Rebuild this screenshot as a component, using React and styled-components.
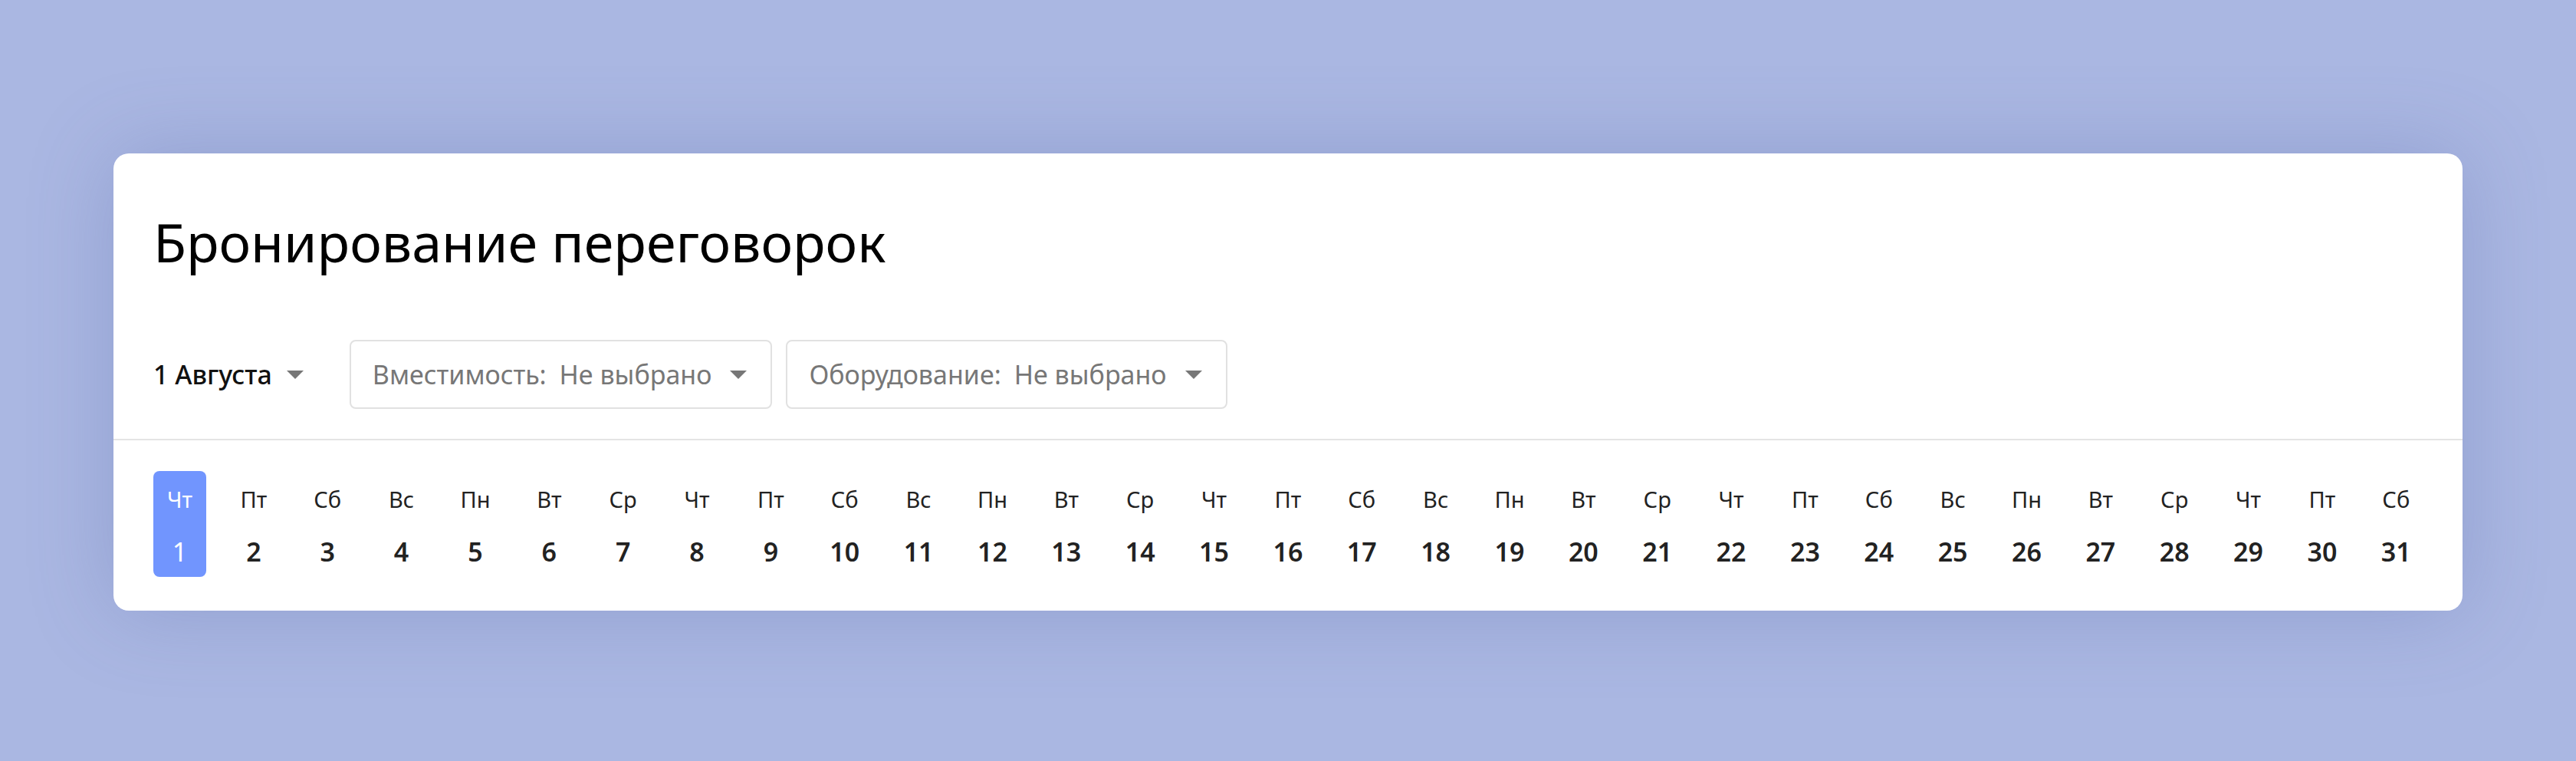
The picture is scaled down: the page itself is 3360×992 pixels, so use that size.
import React from 'react';
import styled, { createGlobalStyle } from 'styled-components';

const GlobalStyle = createGlobalStyle`
  html, body {
    margin: 0;
    padding: 0;
    background: #aab7e2;
  }
  body {
    font-family: 'Noto Sans', 'Open Sans', sans-serif;
  }
`;

const Page = styled.div`
  min-height: 992px;
  padding-top: 200px;
  box-sizing: border-box;
  background: #aab7e2;
`;

const Card = styled.div`
  width: 3064px;
  margin: 0 auto;
  background: #fff;
  border-radius: 20px;
  box-shadow: 0 0 110px rgba(80, 98, 160, 0.28);
`;

const Header = styled.div`
  padding: 73px 52px 39px;
`;

const Title = styled.h1`
  margin: 0;
  font-size: 70px;
  line-height: 84px;
  font-weight: 400;
  color: #000;
`;

const Filters = styled.div`
  display: flex;
  align-items: center;
  gap: 18px;
  margin-top: 86px;
  height: 90px;
`;

const DateSelect = styled.div`
  display: flex;
  align-items: center;
  gap: 19px;
  margin-right: 42px;
  font-size: 34px;
  font-weight: 500;
  color: #111;
`;

const Select = styled.div`
  display: flex;
  align-items: center;
  height: 90px;
  box-sizing: border-box;
  padding: 0 31px 0 28px;
  gap: 24px;
  border: 2px solid #e1e1e1;
  border-radius: 8px;
  font-size: 34px;
  color: #777;
`;

const Label = styled.span`
  margin-right: 17px;
`;

const Caret = styled.span`
  width: 0;
  height: 0;
  border-left: 11px solid transparent;
  border-right: 11px solid transparent;
  border-top: 11px solid #777;
`;

const Divider = styled.div`
  height: 2px;
  background: #e4e4e4;
`;

const Days = styled.div`
  display: flex;
  justify-content: space-between;
  padding: 40px 52px 44px;
`;

const Day = styled.div`
  display: flex;
  flex-direction: column;
  align-items: center;
  width: 69px;
  height: 138px;
  box-sizing: border-box;
  padding-top: 17px;
  border-radius: 8px;
  background: ${p => (p.$active ? '#7195fe' : 'transparent')};
  color: ${p => (p.$active ? '#fff' : '#222')};
`;

const DayName = styled.span`
  font-size: 29px;
  line-height: 40px;
`;

const DayNum = styled.span`
  margin-top: 26px;
  font-size: 34px;
  line-height: 44px;
  font-weight: ${p => (p.$active ? 400 : 600)};
`;

const names = ['Чт', 'Пт', 'Сб', 'Вс', 'Пн', 'Вт', 'Ср'];
const days = Array.from({ length: 31 }, (_, i) => ({ num: i + 1, name: names[i % 7] }));

export default function App() {
  return (
    <Page>
      <GlobalStyle />
      <Card>
        <Header>
          <Title>Бронирование переговорок</Title>
          <Filters>
            <DateSelect>
              1 Августа <Caret />
            </DateSelect>
            <Select>
              <span>
                <Label>Вместимость:</Label>Не выбрано
              </span>
              <Caret />
            </Select>
            <Select>
              <span>
                <Label>Оборудование:</Label>Не выбрано
              </span>
              <Caret />
            </Select>
          </Filters>
        </Header>
        <Divider />
        <Days>
          {days.map(d => (
            <Day key={d.num} $active={d.num === 1}>
              <DayName>{d.name}</DayName>
              <DayNum $active={d.num === 1}>{d.num}</DayNum>
            </Day>
          ))}
        </Days>
      </Card>
    </Page>
  );
}
